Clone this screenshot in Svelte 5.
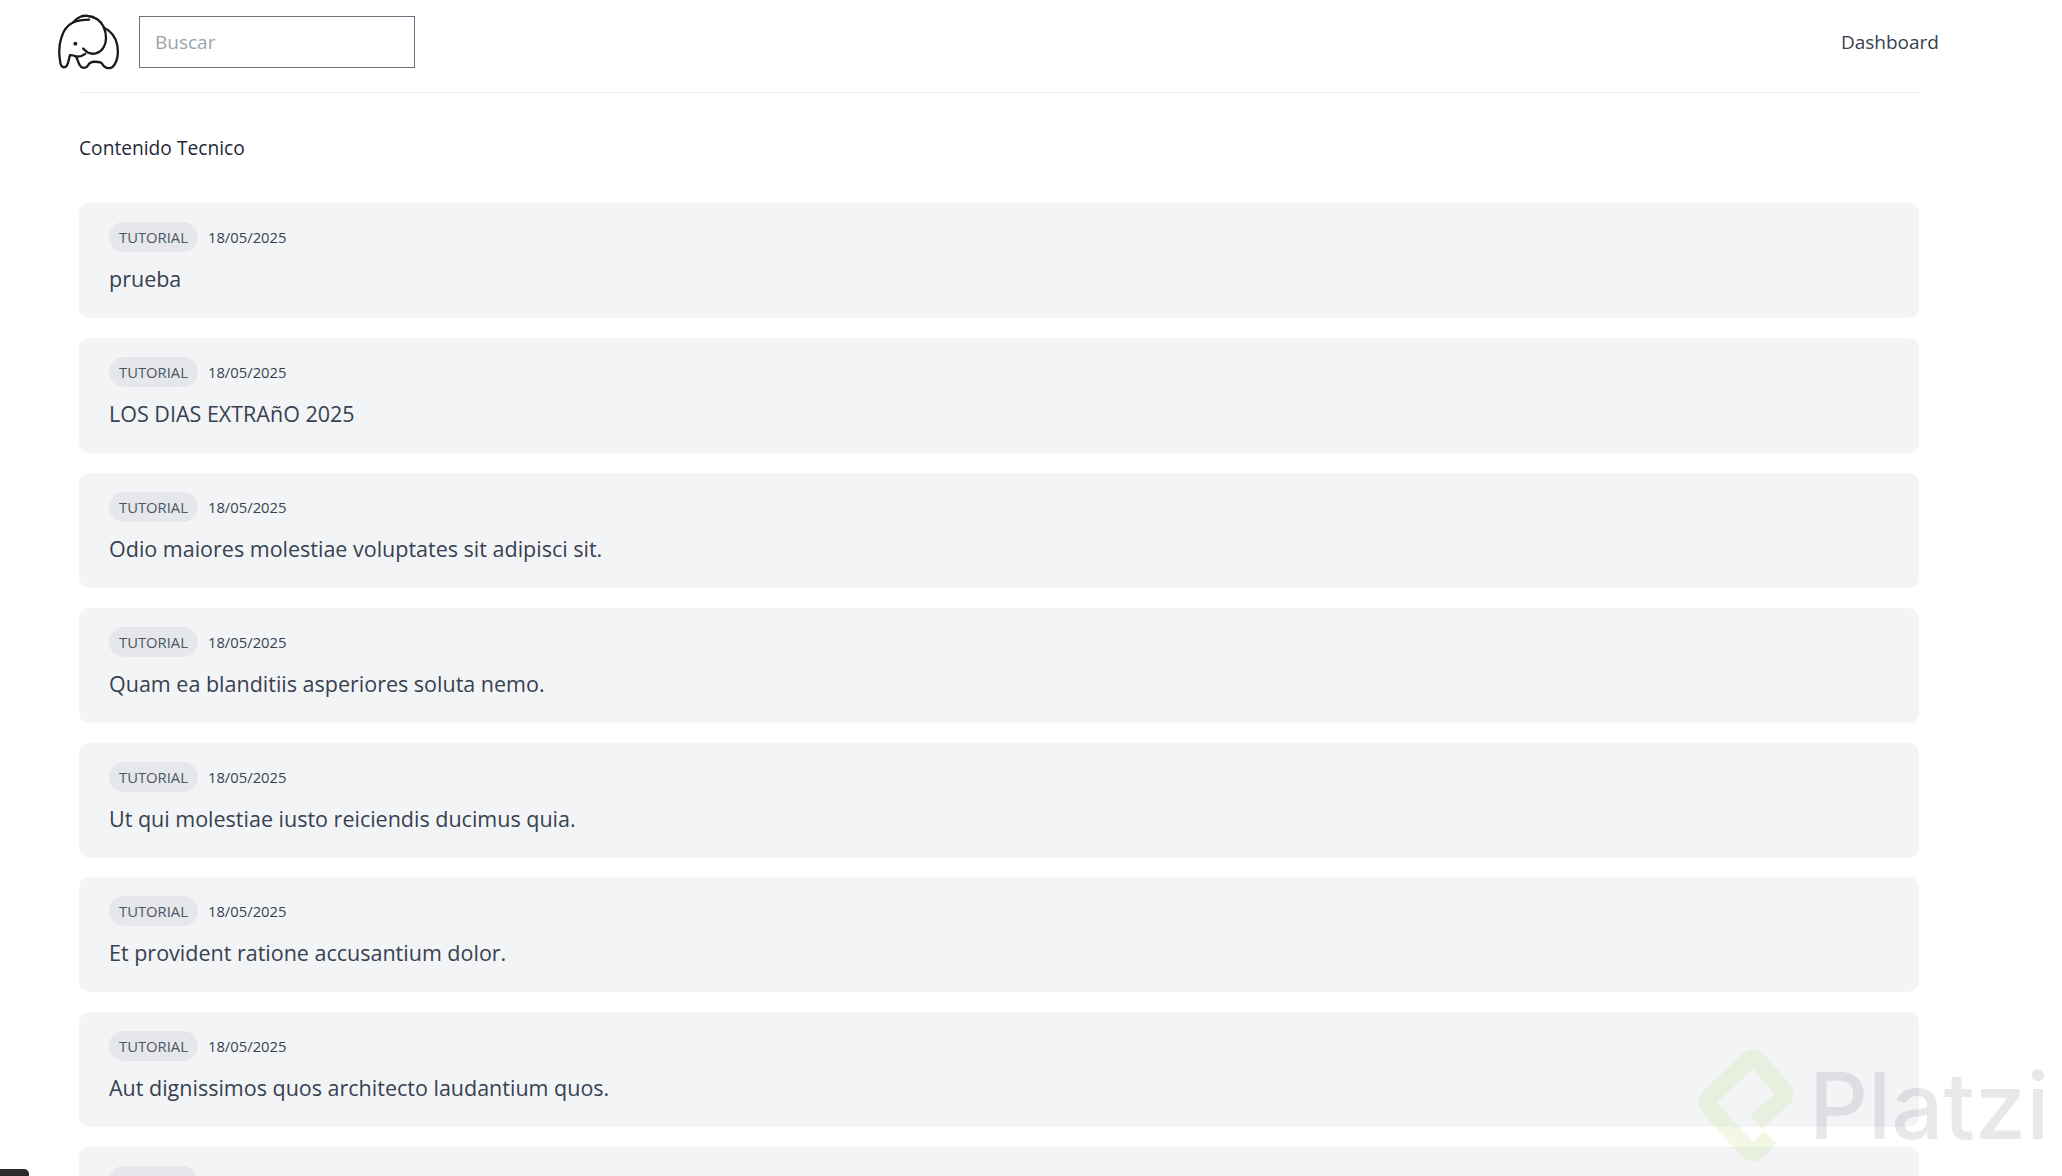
<script>
  const posts = [
    'prueba',
    'LOS DIAS EXTRAñO 2025',
    'Odio maiores molestiae voluptates sit adipisci sit.',
    'Quam ea blanditiis asperiores soluta nemo.',
    'Ut qui molestiae iusto reiciendis ducimus quia.',
    'Et provident ratione accusantium dolor.',
    'Aut dignissimos quos architecto laudantium quos.'
  ];
</script>

<div class="page">
  <header class="topbar">
    <div class="left">
      <svg class="logo" viewBox="40 25 187 170" fill="none" stroke="#1a1a1a" stroke-width="7" stroke-linecap="round" stroke-linejoin="round">
        <path d="M76 150 C72 160 72 172 66 182 C60 190 50 188 47 176 C42 150 42 118 50 96 C56 74 70 58 86 50 C96 36 114 28 130 31 C150 32 170 46 178 64 C186 84 188 108 178 126 C168 144 146 150 130 142 C124 138 120 134 116 130" />
        <path d="M86 50 C100 44 116 42 134 42" />
        <path d="M178 66 C198 76 214 94 219 118 C224 146 218 172 205 186 C196 192 182 190 176 180 C172 172 168 170 150 170 C138 170 134 174 130 182 C124 192 110 190 105 180 C100 170 98 160 94 154 C88 150 82 150 76 150" />
        <path d="M94 154 C104 156 114 152 122 146" />
        <circle cx="92" cy="115" r="6" fill="#1a1a1a" stroke="none" />
      </svg>
      <input class="search" type="text" placeholder="Buscar" />
    </div>
    <a class="nav-link" href="#dashboard">Dashboard</a>
  </header>
  <hr class="rule" />

  <main class="content">
    <h2 class="heading">Contenido Tecnico</h2>
    <div class="list">
      {#each posts as title}
        <article class="card">
          <div class="meta">
            <span class="badge">TUTORIAL</span>
            <span class="date">18/05/2025</span>
          </div>
          <h3 class="title">{title}</h3>
        </article>
      {/each}
      <!-- next card is cut by the fold, only the top of its badge shows -->
      <article class="card">
        <div class="meta"><span class="badge badge-empty"></span></div>
      </article>
    </div>
  </main>

  <!-- watermark from the video player -->
  <div class="watermark">
    <svg class="wm-logo" viewBox="0 0 97 113" fill="none">
      <path d="M72 88 L60 101 Q55 106 50 101 L12 59 Q7 53 12 48 L50 12 Q55 7 60 12 L84 40 Q89 45 84 50 L58 73" stroke="#c3de82" stroke-width="18" />
    </svg>
    <span class="wm-text">Platzi</span>
  </div>
  <div class="corner"></div>
</div>

<style>
  :global(body) {
    margin: 0;
    background: #fff;
    font-family: "Open Sans", "Noto Sans", sans-serif;
    color: #374151;
  }

  .page {
    position: relative;
    height: 100vh;
    overflow: hidden;
  }

  .topbar {
    display: flex;
    align-items: center;
    justify-content: space-between;
    height: 83px;
    padding: 0 123px 0 58px;
    box-sizing: border-box;
  }

  .left {
    display: flex;
    align-items: center;
    gap: 19px;
  }

  .logo {
    width: 62px;
    height: 56px;
  }

  .search {
    width: 276px;
    height: 52px;
    box-sizing: border-box;
    padding: 0 15px;
    border: 1px solid #6b7280;
    font: 19px "Open Sans", sans-serif;
    color: #374151;
    outline: none;
  }

  .search::placeholder {
    color: #9ca3af;
  }

  .nav-link {
    font-size: 19px;
    color: #374151;
    text-decoration: none;
  }

  .rule {
    margin: 9px 143px 0 79px;
    border: 0;
    border-top: 1px solid #eff0f2;
  }

  .content {
    padding: 41px 143px 0 79px;
  }

  .heading {
    margin: 0 0 41px;
    font-size: 19.2px;
    font-weight: 400;
    line-height: 28px;
    color: #1f2937;
  }

  .list {
    display: flex;
    flex-direction: column;
    gap: 19.9px;
  }

  .card {
    height: 115px;
    box-sizing: border-box;
    padding: 18px 30px;
    background: #f3f4f6;
    border-radius: 10px;
  }

  .meta {
    display: flex;
    align-items: center;
    gap: 10px;
    height: 32px;
  }

  .badge {
    display: inline-flex;
    align-items: center;
    height: 30px;
    padding: 0 10px;
    border-radius: 15px;
    background: #e5e7eb;
    font-size: 14.8px;
    color: #4b5563;
  }

  .badge-empty {
    width: 68px;
  }

  .date {
    font-size: 14.8px;
    color: #374151;
  }

  .title {
    margin: 10px 0 0;
    font-size: 21.5px;
    font-weight: 400;
    line-height: 32px;
    color: #374151;
  }

  .watermark {
    position: absolute;
    left: 1698px;
    top: 1049px;
    display: flex;
    align-items: center;
    gap: 14px;
    pointer-events: none;
  }

  .wm-logo {
    width: 97px;
    height: 113px;
    opacity: 0.2;
  }

  .wm-text {
    font: 500 92px "Inter", sans-serif;
    color: #1f2937;
    opacity: 0.1;
  }

  .corner {
    position: absolute;
    left: 0;
    bottom: 0;
    width: 29px;
    height: 7px;
    background: #2b2b2b;
    border-top-right-radius: 5px;
  }
</style>
